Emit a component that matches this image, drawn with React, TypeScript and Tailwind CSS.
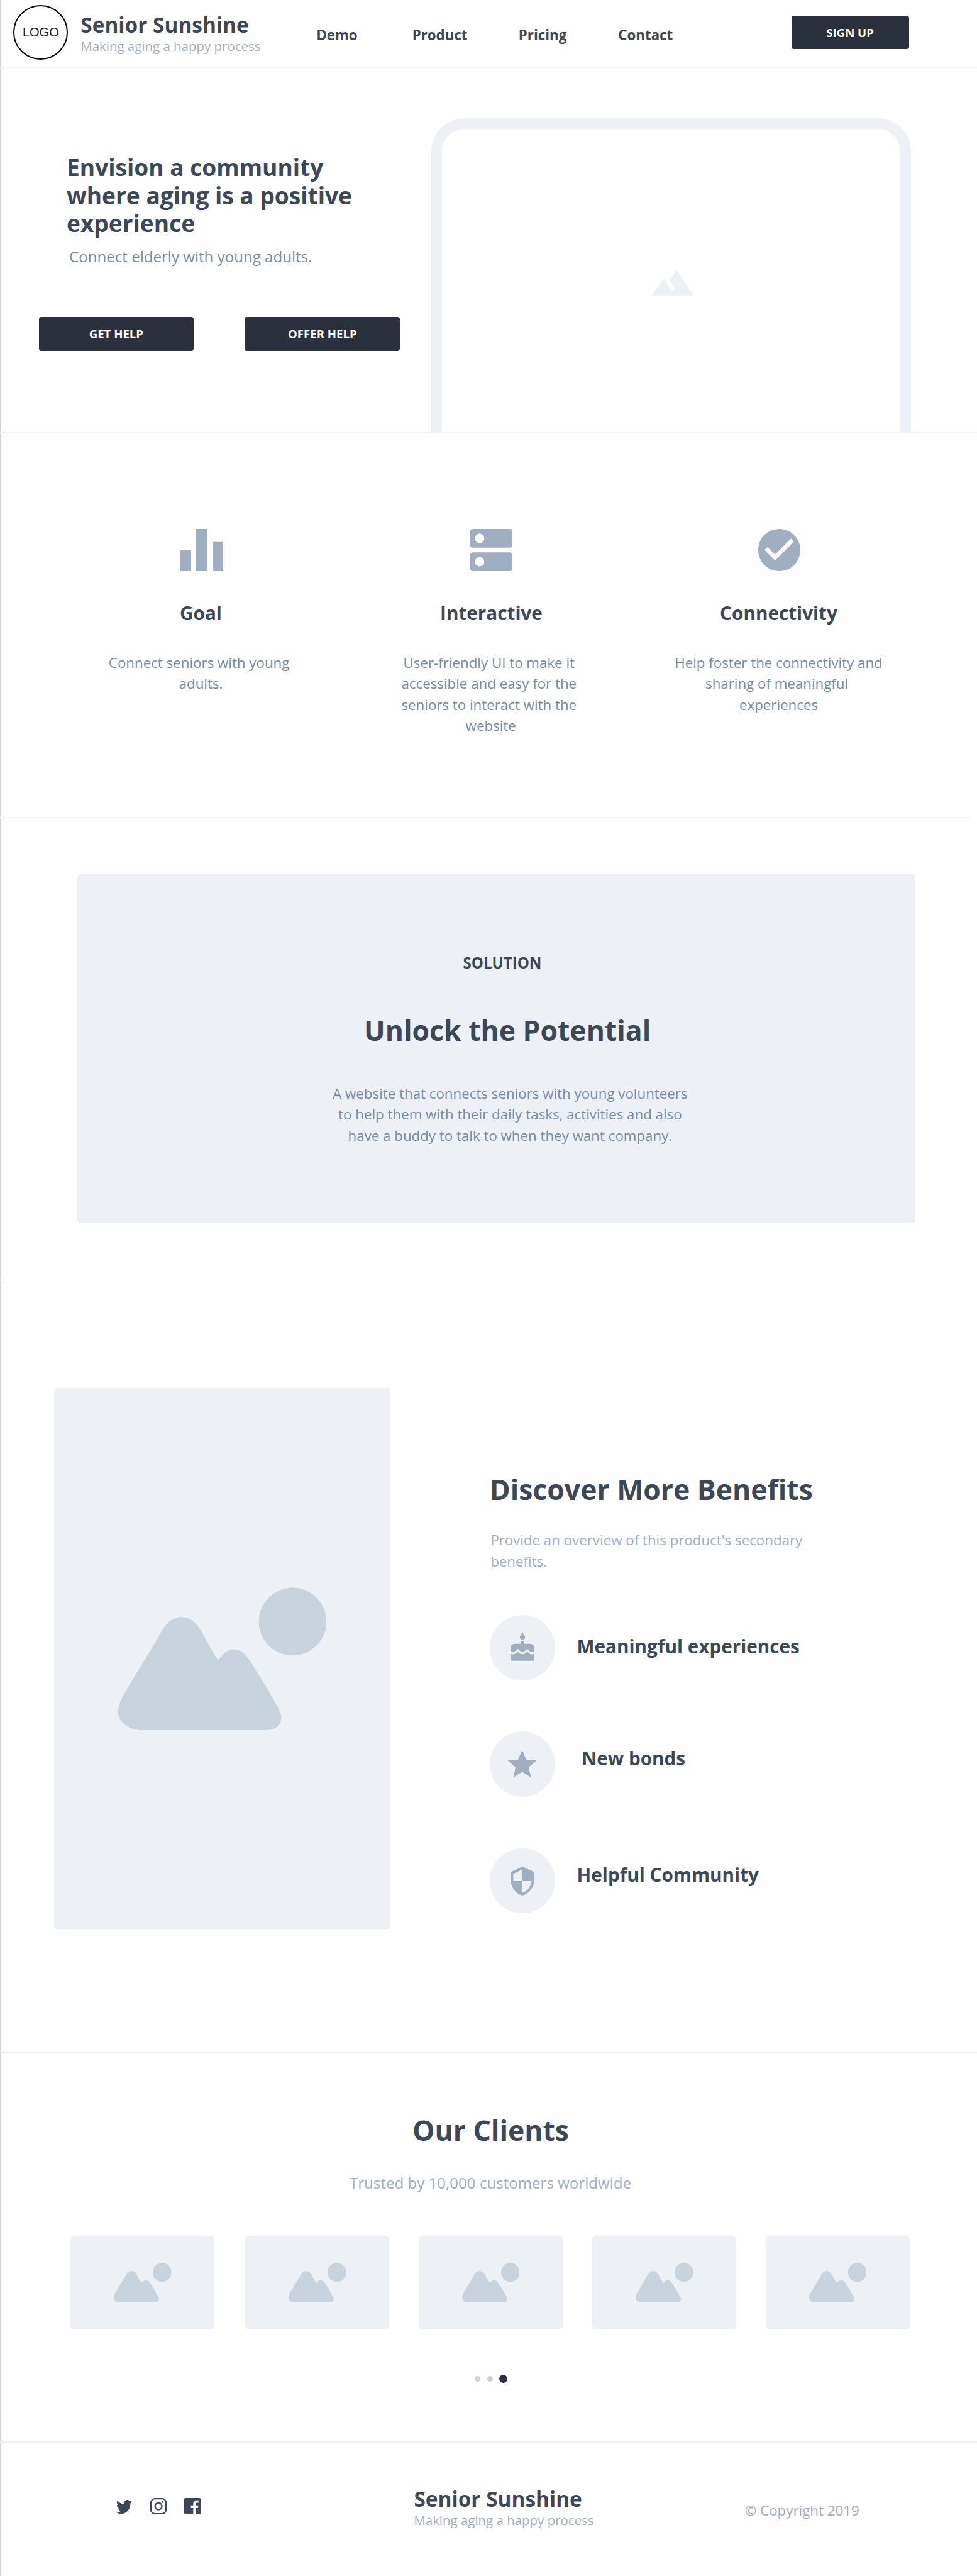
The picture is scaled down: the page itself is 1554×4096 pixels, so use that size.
import type { ReactNode } from "react";

function Brand() {
  return (
    <div>
      <div className="text-[33.4px] font-bold leading-[40px] text-[#3c4857]">Senior Sunshine</div>
      <div className="text-[20.45px] leading-[28px] text-[#a0afc3]">Making aging a happy process</div>
    </div>
  );
}

function Button({ children, className }: { children: ReactNode; className: string }) {
  return (
    <button
      className={`flex h-[53.8px] items-center justify-center rounded-[4px] bg-[#2a313d] pt-px text-[18.6px] font-bold text-white ${className}`}
    >
      {children}
    </button>
  );
}

function PictureIcon({ className }: { className: string }) {
  return (
    <svg viewBox="0 0 331.2 227.4" preserveAspectRatio="none" className={className} fill="#c9d3de">
      <circle cx="277.5" cy="54.5" r="53.9" />
      <path d="M37.4 227.4C12.9 225.6 0 212.7 0 198.1C0 185.2 6.4 174.6 14.7 160.6L65.8 76.2C73.3 60.9 83.9 46.9 100.6 46.9C116.8 46.9 128.2 60.9 134.6 73.8C141.4 87.3 149 102 159.2 116C165.2 107.2 173.5 98.4 184.1 98.4C194.3 98.4 201.1 104.9 206.8 113.1C224.5 140.1 239.7 164.7 254.8 192.2C257.4 197.5 259.3 202.8 259.3 206.9C259.3 218.6 250.2 227.4 232.8 227.4Z" />
    </svg>
  );
}

function Header() {
  return (
    <header className="flex h-[108px] items-start border-b-2 border-[#eff2f6]">
      <div className="ml-[21.3px] mt-[7.5px] flex size-[87px] shrink-0 items-center justify-center rounded-full border-2 border-black text-[20px] font-normal text-[#222] [font-family:'Liberation_Sans',Arial,sans-serif]">
        LOGO
      </div>
      <div className="ml-[20px] mt-[18.6px] w-[375px] shrink-0">
        <Brand />
      </div>
      <nav className="mt-[41px] grid w-[755.3px] shrink-0 grid-cols-[152.4px_169.1px_158.5px_auto] text-[22.3px] font-bold leading-[30px] text-[#3c4857]">
        <a>Demo</a>
        <a>Product</a>
        <a>Pricing</a>
        <a>Contact</a>
      </nav>
      <Button className="mt-[24.5px] w-[187px] shrink-0">SIGN UP</Button>
    </header>
  );
}

function Hero() {
  return (
    <section className="flex h-[581px] border-b-2 border-[#eff2f6]">
      <div className="w-[686.2px] shrink-0 pt-[136.2px]">
        <h1 className="ml-[106px] text-[37.1px] font-bold leading-[44.4px] text-[#3c4857]">
          Envision a community
          <br />
          where aging is a positive
          <br />
          experience
        </h1>
        <p className="ml-[110px] mt-[13.9px] text-[24.1px] leading-[33.4px] text-[#778da6]">
          Connect elderly with young adults.
        </p>
        <div className="ml-[61.5px] mt-[79.3px] flex gap-[81.3px]">
          <Button className="w-[246.7px]">GET HELP</Button>
          <Button className="w-[246.7px]">OFFER HELP</Button>
        </div>
      </div>
      <div className="mt-[79.5px] w-[763.3px] rounded-t-[53px] border-x-[17px] border-t-[17px] border-[#edf0f5]">
        <svg
          viewBox="1 6 22 12"
          preserveAspectRatio="none"
          className="ml-[333.7px] mt-[224.5px] h-[40.8px] w-[66.3px]"
          fill="#edf0f5"
        >
          <path d="M14 6l-3.75 5 2.85 3.8-1.6 1.2C9.81 13.75 7 10 7 10l-6 8h22L14 6z" />
        </svg>
      </div>
    </section>
  );
}

const features = [
  {
    title: "Goal",
    shift: "pl-[2.8px]",
    titleShift: "",
    linesShift: "",
    lines: ["Connect seniors with young ", "adults."],
    viewBox: "0 0 67 67",
    path: "M0 33.4H17V67H0zM25 0H42V67H25zM51 20.8H67.5V67H51z",
  },
  {
    title: "Interactive",
    shift: "pl-[4.8px]",
    titleShift: "pl-[4px]",
    linesShift: "pl-[2.4px]",
    lines: ["User-friendly UI to make it ", "accessible and easy for the ", "seniors to interact with the ", "website"],
    viewBox: "3 3 18 18",
    path: "M20 13H4c-.55 0-1 .45-1 1v6c0 .55.45 1 1 1h16c.55 0 1-.45 1-1v-6c0-.55-.45-1-1-1zM7 19c-1.1 0-2-.9-2-2s.9-2 2-2 2 .9 2 2-.9 2-2 2zM20 3H4c-.55 0-1 .45-1 1v6c0 .55.45 1 1 1h16c.55 0 1-.45 1-1V4c0-.55-.45-1-1-1zM7 9c-1.1 0-2-.9-2-2s.9-2 2-2 2 .9 2 2-.9 2-2 2z",
  },
  {
    title: "Connectivity",
    shift: "pl-[1px]",
    titleShift: "",
    linesShift: "",
    lines: ["Help foster the connectivity and", "sharing of meaningful ", "experiences"],
    viewBox: "2 2 20 20",
    path: "M12 2C6.48 2 2 6.48 2 12s4.48 10 10 10 10-4.48 10-10S17.52 2 12 2zm-2 15l-5-5 1.41-1.41L10 14.17l7.59-7.59L19 8l-9 9z",
  },
];

function Features() {
  return (
    <section className="grid h-[612px] w-[1545px] grid-cols-[460px_460px_458px] border-b-2 border-[#eff2f6] pl-[89.5px] pt-[152px] text-center">
      {features.map((f) => (
        <div key={f.title}>
          <div className={`flex justify-center ${f.shift}`}>
            <svg viewBox={f.viewBox} className="size-[67px]" fill="#a0aec1">
              <path d={f.path} />
            </svg>
          </div>
          <h3 className={`mt-[46.8px] text-[29.7px] font-bold leading-[40px] text-[#3c4857] ${f.titleShift}`}>
            {f.title}
          </h3>
          <div className={`mt-[42.2px] whitespace-pre text-[22.3px] leading-[33.4px] text-[#778da6] ${f.linesShift}`}>
            {f.lines.map((l) => (
              <div key={l}>{l}</div>
            ))}
          </div>
        </div>
      ))}
    </section>
  );
}

function Solution() {
  return (
    <section className="h-[735px] w-[1545px] border-b border-[#eaeef3] pt-[88.8px]">
      <div className="ml-[122.9px] h-[555.3px] w-[1333.6px] rounded-[6px] bg-[#edf0f5] pt-[123.9px] text-center">
        <div className="pl-[18.6px] text-[24.1px] font-bold leading-[34px] text-[#3c4857]">SOLUTION</div>
        <h2 className="mt-[60.3px] pl-[35px] text-[44.5px] font-bold leading-[60px] text-[#3c4857]">
          Unlock the Potential
        </h2>
        <p className="mt-[54px] pl-[43.4px] text-[22.3px] leading-[33.4px] text-[#778da6]">
          A website that connects seniors with young volunteers
          <br />
          to help them with their daily tasks, activities and also
          <br />
          have a buddy to talk to when they want company.
        </p>
      </div>
    </section>
  );
}

const benefits = [
  {
    label: "Meaningful experiences",
    labelClass: "ml-[35px] pb-[3.8px]",
    iconClass: "size-[50px]",
    path: "M12 6c1.11 0 2-.9 2-2 0-.38-.1-.73-.29-1.03L12 0l-1.71 2.97c-.19.3-.29.65-.29 1.03 0 1.1.9 2 2 2zm4.6 9.99l-1.07-1.07-1.08 1.07c-1.3 1.3-3.58 1.31-4.89 0l-1.07-1.07-1.09 1.07C6.75 16.64 5.88 17 4.96 17c-.73 0-1.4-.23-1.96-.61V21c0 .55.45 1 1 1h16c.55 0 1-.45 1-1v-4.61c-.56.38-1.23.61-1.96.61-.92 0-1.79-.36-2.44-1.01zM18 9h-5V7h-2v2H6c-1.66 0-3 1.34-3 3v1.54c0 1.08.88 1.96 1.96 1.96.52 0 1.02-.2 1.38-.57l2.14-2.13 2.13 2.13c.74.74 2.03.74 2.77 0l2.14-2.13 2.13 2.13c.37.37.86.57 1.38.57 1.08 0 1.96-.88 1.96-1.96V12C21 10.34 19.66 9 18 9z",
  },
  {
    label: "New bonds",
    labelClass: "ml-[42.5px] pb-[18.8px]",
    iconClass: "size-[55px]",
    path: "M12 17.27L18.18 21l-1.64-7.03L22 9.24l-7.19-.61L12 2 9.19 8.63 2 9.24l5.46 4.73L5.82 21z",
  },
  {
    label: "Helpful Community",
    labelClass: "ml-[35px] pb-[19.2px]",
    iconClass: "size-[50px]",
    path: "M12 1L3 5v6c0 5.55 3.84 10.74 9 12 5.16-1.26 9-6.45 9-12V5l-9-4zm0 10.99h7c-.53 4.12-3.28 7.79-7 8.94V12H5V6.3l7-3.11v8.8z",
  },
];

function Benefits() {
  return (
    <section className="flex h-[1228px] items-start border-b border-[#eaeef3] pt-[170.8px]">
      <div className="ml-[86.1px] h-[861.5px] w-[535.4px] shrink-0 rounded-[5px] bg-[#edf0f5] pl-[102.1px] pt-[317.1px]">
        <PictureIcon className="h-[227.4px] w-[331.2px]" />
      </div>
      <div className="ml-[157.3px] pt-[130.8px]">
        <h2 className="text-[44.5px] font-bold leading-[60px] text-[#3c4857]">Discover More Benefits</h2>
        <p className="ml-[1.4px] mt-[34.5px] text-[22.3px] leading-[33.4px] text-[#a0afc3]">
          Provide an overview of this product's secondary
          <br />
          benefits.
        </p>
        <ul className="mt-[69.2px] flex flex-col gap-[81.5px]">
          {benefits.map((b) => (
            <li key={b.label} className="flex items-center">
              <span className="flex size-[103.8px] items-center justify-center rounded-full bg-[#edf0f5]">
                <svg viewBox="0 0 24 24" className={b.iconClass} fill="#a0aec1">
                  <path d={b.path} />
                </svg>
              </span>
              <span className={`text-[29.7px] font-bold leading-[40px] text-[#3c4857] ${b.labelClass}`}>{b.label}</span>
            </li>
          ))}
        </ul>
      </div>
    </section>
  );
}

function Clients() {
  return (
    <section className="h-[620px] border-b-2 border-[#eff2f6] pt-[93.1px]">
      <h2 className="pl-[7px] text-center text-[44.5px] font-bold leading-[60px] text-[#3c4857]">Our Clients</h2>
      <p className="mt-[36.9px] pl-[6px] text-center text-[24.1px] leading-[33.4px] text-[#a0afc3]">
        Trusted by 10,000 customers worldwide
      </p>
      <div className="ml-[111.9px] mt-[68px] flex gap-[46.4px]">
        {[0, 1, 2, 3, 4].map((i) => (
          <div
            key={i}
            className="flex h-[148.2px] w-[229.6px] items-center justify-center rounded-[6px] bg-[#edf0f5] first:mr-[1.9px]"
          >
            <PictureIcon className="h-[63.4px] w-[91.7px]" />
          </div>
        ))}
      </div>
      <div className="ml-[754.7px] mt-[72.2px] flex items-center">
        <span className="size-[9.4px] rounded-full bg-[#c9d3de]" />
        <span className="ml-[10.9px] size-[9.4px] rounded-full bg-[#c9d3de]" />
        <span className="ml-[9.5px] size-[13.2px] rounded-full bg-[#2a313c]" />
      </div>
    </section>
  );
}

function Footer() {
  return (
    <footer className="flex h-[212px] items-start pl-[184.5px]">
      <div className="mt-[88.1px] flex w-[473.9px] shrink-0 items-start">
        <svg viewBox="0 2.2 24 19.6" preserveAspectRatio="none" className="mt-[2.9px] h-[22.3px] w-[25px]" fill="#3c4857">
          <path d="M23.953 4.57a10 10 0 01-2.825.775 4.958 4.958 0 002.163-2.723c-.951.555-2.005.959-3.127 1.184a4.92 4.92 0 00-8.384 4.482C7.69 8.095 4.067 6.13 1.64 3.162a4.822 4.822 0 00-.666 2.475c0 1.71.87 3.213 2.188 4.096a4.904 4.904 0 01-2.228-.616v.06a4.923 4.923 0 003.946 4.827 4.996 4.996 0 01-2.212.085 4.936 4.936 0 004.604 3.417 9.867 9.867 0 01-6.102 2.105c-.39 0-.779-.023-1.17-.067a13.995 13.995 0 007.557 2.209c9.053 0 13.998-7.496 13.998-13.985 0-.21 0-.42-.015-.63A9.935 9.935 0 0024 4.59z" />
        </svg>
        <svg viewBox="0 0 106 106" className="ml-[29.1px] size-[26.2px]" fill="none" stroke="#3c4857" strokeWidth="9">
          <rect x="4.5" y="4.5" width="97" height="97" rx="25" />
          <circle cx="53" cy="53" r="22" />
          <circle cx="81" cy="26" r="6" fill="#3c4857" stroke="none" />
        </svg>
        <svg viewBox="0 0 106 106" className="ml-[27.9px] size-[26.2px]" fill="#3c4857">
          <path d="M10 0H96Q106 0 106 10V96Q106 106 96 106H74V65H89L91 48H74V38C74 33 76 30 82 30H92V15H78C66 15 58 24 58 38V48H43V65H58V106H10Q0 106 0 96V10Q0 0 10 0Z" />
        </svg>
      </div>
      <div className="mt-[69.1px] w-[526.4px] shrink-0">
        <Brand />
      </div>
      <div className="mt-[92.9px] text-[22.3px] leading-[30px] text-[#a0afc3]">© Copyright 2019</div>
    </footer>
  );
}

export default function App() {
  return (
    <div className="h-[4096px] w-[1554px] overflow-hidden bg-[#fefefe] font-['Open_Sans',sans-serif] shadow-[inset_1px_0_0_#d0d3d8]">
      <Header />
      <Hero />
      <Features />
      <Solution />
      <Benefits />
      <Clients />
      <Footer />
    </div>
  );
}
